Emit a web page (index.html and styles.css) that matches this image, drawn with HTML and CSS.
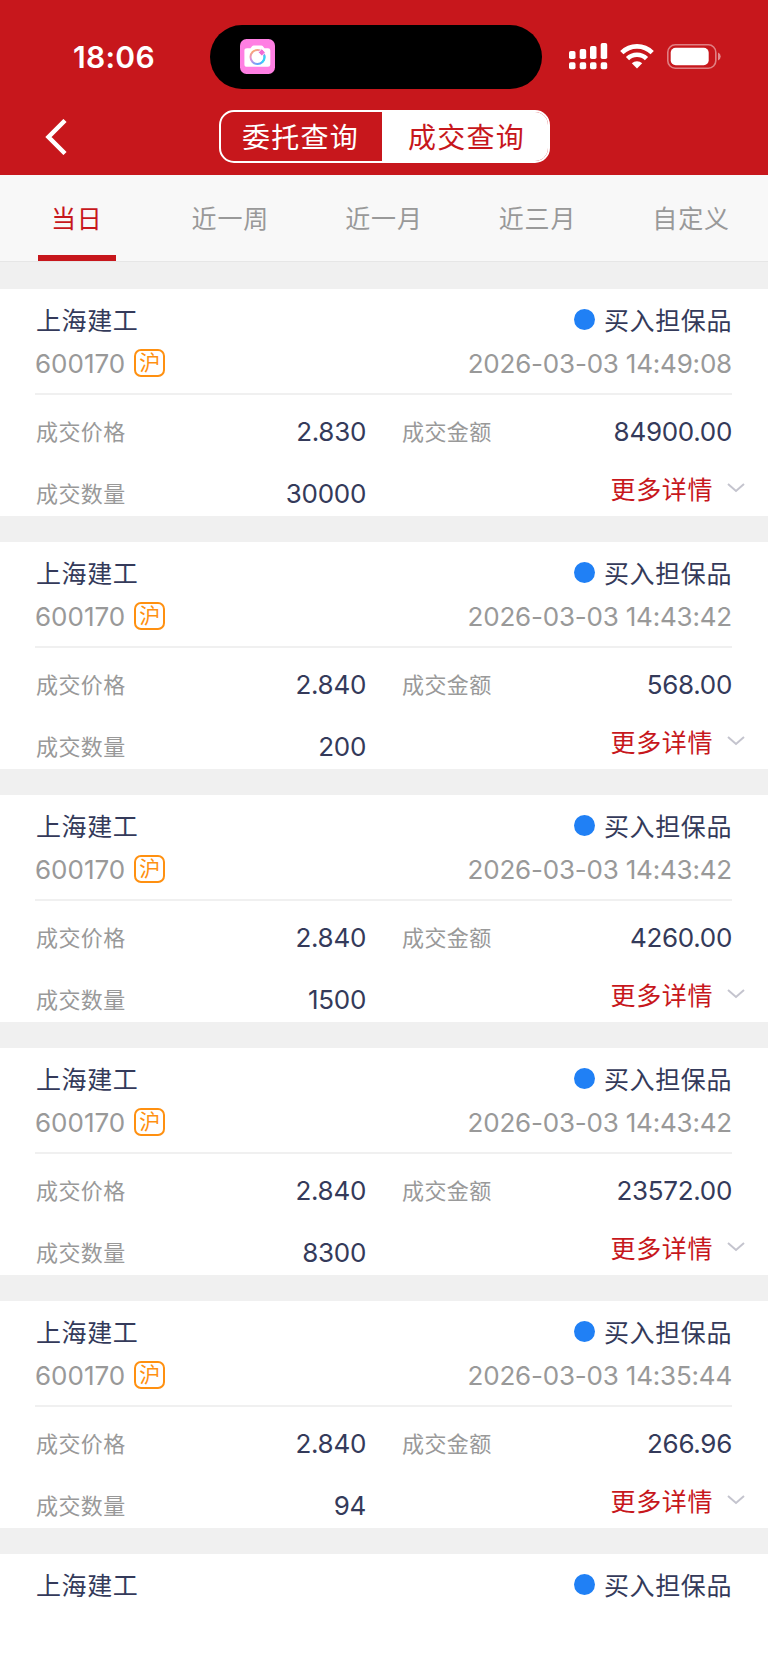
FILE: index.html
```html
<!DOCTYPE html>
<html lang="zh-CN">
<head>
    <meta charset="UTF-8">
    <meta name="viewport" content="width=device-width, initial-scale=1.0">
    <title>成交查询</title>
    <link rel="stylesheet" href="styles.css">
</head>
<body>

    <header class="header">
        <!-- Status bar -->
        <div class="status-bar">
            <div class="clock">18:06</div>
            <div class="island">
                <svg class="camera-icon" viewBox="0 0 35 35">
                    <defs>
                        <linearGradient id="ring" x1="0" y1="0" x2="0.6" y2="1">
                            <stop offset="0" stop-color="#ffb347"/>
                            <stop offset="0.45" stop-color="#e58bd8"/>
                            <stop offset="1" stop-color="#5aa8ff"/>
                        </linearGradient>
                    </defs>
                    <rect width="35" height="35" rx="6.5" fill="#ff7fe3"/>
                    <path d="M7 9.2h3.5l1.8-2.2q.5-.6 1.3-.6h7.8q.8 0 1.3.6l1.8 2.2H28q2.300 0 2.300 2.300v14q0 2.300-2.300 2.300H7q-2.600 0-2.600-2.300v-14Q4.400 9.200 7 9.200z" fill="#fff"/>
                    <circle cx="17.5" cy="18" r="7" fill="none" stroke="url(#ring)" stroke-width="2"/>
                    <path d="M24.300 16.300a7 7 0 0 1-2.500 7.200" fill="none" stroke="#35d6f5" stroke-width="2"/>
                    <path d="M21.800 9.700l3.400 3.700-3.400 3.700-3.400-3.700z" fill="#f06bd6" stroke="#fff" stroke-width="0.8"/>
                </svg>
            </div>
            <div class="status-icons">
                <svg class="signal-icon" viewBox="0 0 39 27" fill="#fff">
                    <rect x="0" y="8" width="6.5" height="8" rx="1.8"/>
                    <rect x="10.7" y="6" width="6.5" height="10" rx="1.8"/>
                    <rect x="21" y="3" width="6.5" height="13" rx="1.8"/>
                    <rect x="31.7" y="0" width="6.5" height="16" rx="1.8"/>
                    <rect x="0" y="19.3" width="6.5" height="7" rx="1.8"/>
                    <rect x="10.7" y="19.3" width="6.5" height="7" rx="1.8"/>
                    <rect x="21" y="19.3" width="6.5" height="7" rx="1.8"/>
                    <rect x="31.7" y="19.3" width="6.5" height="7" rx="1.8"/>
                </svg>
                <svg class="wifi-icon" viewBox="0 0 34 25">
                    <g fill="none" stroke="#fff" stroke-width="4.6">
                        <path d="M1.800 8.700a21.500 21.500 0 0 1 30.400 0"/>
                        <path d="M7.500 14.700a13.500 13.500 0 0 1 19 0"/>
                    </g>
                    <path d="M17 24.500l-5.200-5.200a7.400 7.400 0 0 1 10.400 0z" fill="#fff"/>
                </svg>
                <svg class="battery-icon" viewBox="0 0 54 25">
                    <rect x="0.8" y="0.8" width="48" height="23.4" rx="7.5" fill="none" stroke="#fff" stroke-opacity="0.45" stroke-width="1.6"/>
                    <rect x="3.7" y="3.7" width="38" height="17.6" rx="5" fill="#fff"/>
                    <path d="M51 8.500q2.700 1.200 2.700 4t-2.700 4z" fill="#fff" fill-opacity="0.5"/>
                </svg>
            </div>
        </div>

        <!-- Navigation -->
        <div class="nav">
            <a class="back" href="#" aria-label="返回">
                <svg viewBox="0 0 22 36"><path d="M20 1.500L3.500 18 20 34.500" fill="none" stroke="#fff" stroke-width="4.500"/></svg>
            </a>
            <div class="switch">
                <span class="switch-item">委托查询</span>
                <span class="switch-item active">成交查询</span>
            </div>
        </div>
    </header>

    <nav class="tabs">
        <span class="tab active">当日</span>
        <span class="tab">近一周</span>
        <span class="tab">近一月</span>
        <span class="tab">近三月</span>
        <span class="tab">自定义</span>
    </nav>

    <!-- Deals, filled in by the script below -->
    <main class="list" id="dealList"></main>

    <script>
        const deals = [
            { time: '2026-03-03 14:49:08', price: '2.830', amount: '84900.00', count: '30000' },
            { time: '2026-03-03 14:43:42', price: '2.840', amount: '568.00', count: '200' },
            { time: '2026-03-03 14:43:42', price: '2.840', amount: '4260.00', count: '1500' },
            { time: '2026-03-03 14:43:42', price: '2.840', amount: '23572.00', count: '8300' },
            { time: '2026-03-03 14:35:44', price: '2.840', amount: '266.96', count: '94' }
        ];

        const title = `
            <div class="row">
                <span class="name">上海建工</span>
                <span class="type"><i class="dot"></i>买入担保品</span>
            </div>`;

        const cards = deals.map(deal => `
            <section class="card">
                ${title}
                <div class="row sub">
                    <span class="code">600170<b class="market">沪</b></span>
                    <span class="time">${deal.time}</span>
                </div>
                <div class="details">
                    <div class="cell"><span class="label">成交价格</span><span class="value">${deal.price}</span></div>
                    <div class="cell"><span class="label">成交金额</span><span class="value">${deal.amount}</span></div>
                    <div class="cell"><span class="label">成交数量</span><span class="value">${deal.count}</span></div>
                    <a class="more" href="#">更多详情<svg viewBox="0 0 18 10"><path d="M1 1l8 7 8-7" fill="none" stroke="#c4c4ce" stroke-width="2"/></svg></a>
                </div>
            </section>`);

        // The last deal only shows its title row
        cards.push(`<section class="card">${title}</section>`);
        document.getElementById('dealList').innerHTML = cards.join('');
    </script>

</body>
</html>
```
FILE: styles.css
```css
* {
    box-sizing: border-box;
}

body {
    margin: 0;
    background-color: #fff;
    color: #343a5a;
    font-family: Inter, "Noto Sans CJK SC", sans-serif;
    font-size: 25px;
}

a {
    color: inherit;
    text-decoration: none;
}

svg {
    display: block;
}

.header {
    height: 175px;
    background-color: #c7171c;
    color: #fff;
}

.status-bar {
    display: grid;
    grid-template-columns: 210px 332px 1fr;
    align-items: center;
    height: 110px;
    padding-top: 3px;
}

.clock {
    padding-left: 73px;
    font-size: 30px;
    font-weight: 600;
    letter-spacing: 0.3px;
}

.island {
    display: flex;
    align-items: center;
    height: 64px;
    padding-left: 30px;
    border-radius: 32px;
    background-color: #000;
}

.camera-icon {
    width: 35px;
    height: 35px;
}

.status-icons {
    display: flex;
    align-items: center;
    padding-left: 27px;
}

.signal-icon {
    width: 39px;
    height: 27px;
}

.wifi-icon {
    width: 34px;
    height: 25px;
    margin-left: 12px;
}

.battery-icon {
    width: 54px;
    height: 25px;
    margin-left: 13px;
}

.nav {
    display: grid;
    grid-template-columns: 219px 331px 1fr;
    align-items: center;
    height: 53px;
}

.back {
    padding-left: 45px;
}

.back svg {
    width: 22px;
    height: 36px;
}

.switch {
    display: flex;
    height: 53px;
    border: 2px solid #fff;
    border-radius: 15px;
    overflow: hidden;
}

.switch-item {
    width: 161px;
    padding: 2px 2px 0 0;
    font-size: 28px;
    letter-spacing: 1.3px;
    line-height: 49px;
    text-align: center;
}

.switch-item.active {
    flex: 1;
    padding: 2px 0 0 3px;
    background-color: #fff;
    color: #c7171c;
}

.tabs {
    display: flex;
    height: 87px;
    border-bottom: 1px solid #e6e6e6;
    background-color: #f8f8f8;
    color: #999;
}

.tab {
    display: flex;
    flex: 1;
    flex-direction: column;
    align-items: center;
    padding-top: 1px;
    letter-spacing: 0.9px;
    line-height: 87px;
}

.tab.active {
    color: #c7171c;
}

.tab.active::after {
    content: "";
    width: 78px;
    height: 6px;
    margin-top: -8px;
    background-color: #c7171c;
}

.card {
    height: 253px;
    padding: 8px 36px 0 35px;
    border-top: 26px solid #f0f0f0;
}

.card:first-child {
    height: 254px;
    border-top-width: 27px;
}

.card:last-child {
    height: auto;
}

.row {
    display: flex;
    justify-content: space-between;
    align-items: center;
    height: 44px;
    letter-spacing: 0.6px;
}

.name {
    padding-left: 1px;
}

.type,
.code {
    display: flex;
    align-items: center;
}

.dot {
    width: 21px;
    height: 21px;
    margin-right: 9px;
    border-radius: 50%;
    background-color: #2080f5;
}

.sub {
    height: 54px;
    padding-bottom: 8px;
    border-bottom: 2px solid #f0f0f0;
    color: #999;
    font-size: 26px;
    letter-spacing: 0;
}

.time {
    letter-spacing: -0.2px;
}

.market {
    width: 31px;
    height: 28px;
    margin-left: 9px;
    border: 2px solid #ff9010;
    border-radius: 7px;
    color: #ff9010;
    font-size: 21px;
    font-weight: 400;
    line-height: 23px;
    text-align: center;
}

.details {
    display: grid;
    grid-template-columns: 331px 331px;
    column-gap: 35px;
    padding-top: 5px;
}

.cell {
    display: flex;
    justify-content: space-between;
    align-items: center;
    height: 62px;
}

.label {
    padding: 0 0 2px 1px;
    color: #999;
    font-size: 22px;
    letter-spacing: 0.4px;
}

.value {
    font-size: 26px;
    letter-spacing: -0.3px;
}

.more {
    display: flex;
    align-items: center;
    justify-content: flex-end;
    height: 52px;
    margin-right: -13px;
    color: #c7171c;
    letter-spacing: 0.6px;
}

.more svg {
    width: 18px;
    height: 10px;
    margin-left: 14px;
}
```
